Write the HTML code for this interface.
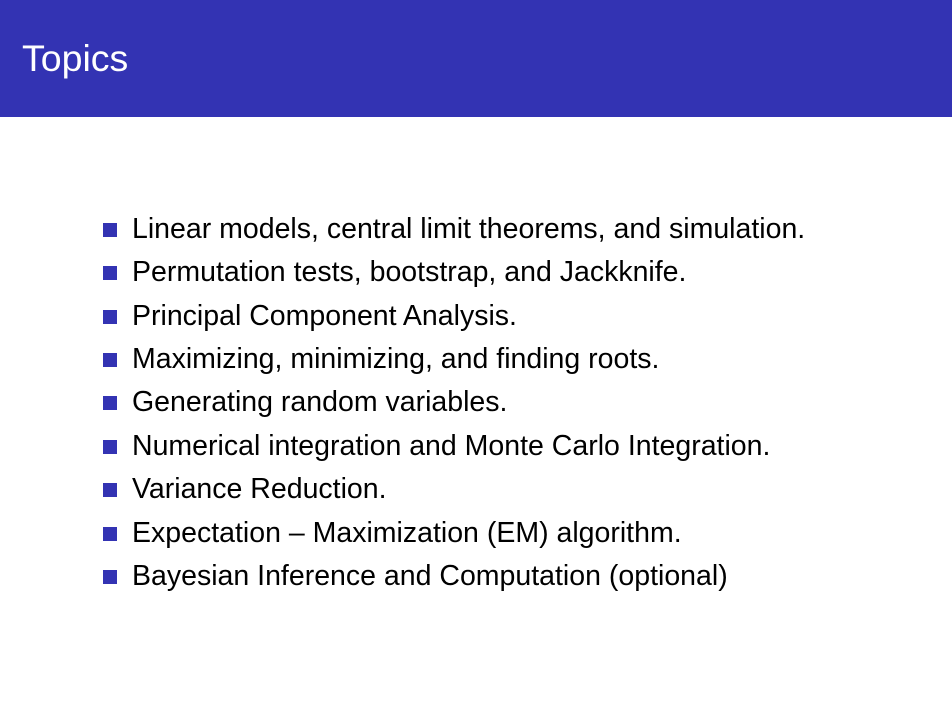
<!DOCTYPE html>
<html><head><style>
body{margin:0;width:952px;height:713px;background:#fff;position:relative;overflow:hidden;font-family:"Liberation Sans",sans-serif;}
.hd{position:absolute;left:0;top:0;width:952px;height:117px;background:#3333b3;}
.hd span{position:absolute;left:22px;top:37px;color:#fff;font-size:37.5px;line-height:42px;}
.it{position:absolute;left:132px;font-size:28.5px;line-height:30px;color:#000;white-space:nowrap;}
.b{position:absolute;left:103px;width:14px;height:14px;background:#3333b3;}
</style></head><body>
<div class="hd"><span>Topics</span></div>
<div class="b" style="top:223px"></div><div class="it" style="top:214px">Linear models, central limit theorems, and simulation.</div>
<div class="b" style="top:266px"></div><div class="it" style="top:257px">Permutation tests, bootstrap, and Jackknife.</div>
<div class="b" style="top:310px"></div><div class="it" style="top:301px">Principal Component Analysis.</div>
<div class="b" style="top:353px"></div><div class="it" style="top:344px">Maximizing, minimizing, and finding roots.</div>
<div class="b" style="top:396px"></div><div class="it" style="top:387px">Generating random variables.</div>
<div class="b" style="top:440px"></div><div class="it" style="top:431px">Numerical integration and Monte Carlo Integration.</div>
<div class="b" style="top:483px"></div><div class="it" style="top:474px">Variance Reduction.</div>
<div class="b" style="top:527px"></div><div class="it" style="top:518px">Expectation – Maximization (EM) algorithm.</div>
<div class="b" style="top:570px"></div><div class="it" style="top:561px">Bayesian Inference and Computation (optional)</div>
</body></html>
